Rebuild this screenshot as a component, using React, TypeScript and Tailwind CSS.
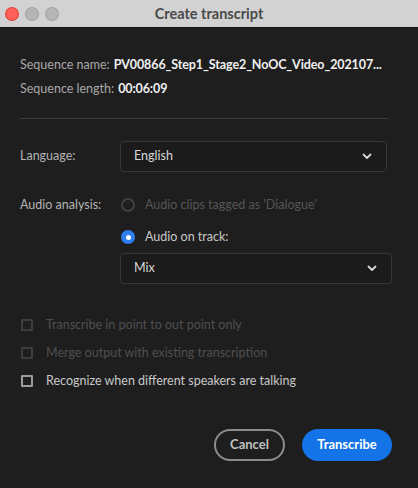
import React from "react";

function Chevron() {
  return (
    <svg width="10" height="7" viewBox="0 0 10 7" fill="none">
      <path d="M1.5 1.5 L5 5 L8.5 1.5" stroke="#d6d6d6" strokeWidth="1.8" strokeLinecap="round" strokeLinejoin="round" />
    </svg>
  );
}

function Select({ value, className }: { value: string; className: string }) {
  return (
    <div
      className={`flex h-[31px] shrink-0 items-center justify-between rounded-[4px] border border-[#383838] bg-[#1b1b1b] pl-[13px] pr-[14px] text-[12.5px] text-[#d8d8d8] ${className}`}
    >
      <span>{value}</span>
      <Chevron />
    </div>
  );
}

function Checkbox({ label, disabled }: { label: string; disabled?: boolean }) {
  return (
    <div className="flex h-5 items-center">
      <div
        className={`ml-[1px] h-[12px] w-[12px] rounded-[1px] border-2 ${disabled ? "border-[#3d3d3d]" : "border-[#9c9c9c]"}`}
      />
      <span className={`ml-[13px] text-[12.5px] ${disabled ? "text-[#4f4f4f]" : "text-[#c9c9c9]"}`}>{label}</span>
    </div>
  );
}

export default function App() {
  return (
    <div
      className="h-[488px] w-[418px] overflow-hidden bg-[#1e1e1e]"
      style={{ fontFamily: 'Lato, "Noto Sans", sans-serif' }}
    >
      <div className="relative flex h-[28px] items-center border-b border-[#111] bg-[#d2d2d2]">
        <div className="ml-[6px] flex gap-[8px]">
          <div className="h-[12px] w-[12px] rounded-full bg-[#fe5f57] ring-1 ring-[#e0443e]" />
          <div className="h-[12px] w-[12px] rounded-full bg-[#b5b5b5] ring-1 ring-[#a2a2a2]" />
          <div className="h-[12px] w-[12px] rounded-full bg-[#b5b5b5] ring-1 ring-[#a2a2a2]" />
        </div>
        <div className="absolute inset-0 flex items-center justify-center text-[14.5px] font-bold text-[#4a4a4a]">
          Create transcript
        </div>
      </div>

      <div className="pl-[20px] pr-[30px] pt-[25px]">
        <div className="flex h-6 items-center whitespace-nowrap">
          <span className="text-[12.5px] text-[#a8a8a8]">Sequence name:</span>
          <span className="ml-[4px] text-[12.5px] font-bold tracking-[-0.1px] text-[#f0f0f0]">PV00866_Step1_Stage2_NoOC_Video_202107...</span>
        </div>
        <div className="flex h-6 items-center whitespace-nowrap">
          <span className="text-[12.5px] text-[#a8a8a8]">Sequence length:</span>
          <span className="ml-[4px] text-[12.5px] font-bold tracking-[-0.1px] text-[#f0f0f0]">00:06:09</span>
        </div>

        <div className="mt-[17px] h-px bg-[#3a3a3a]" />

        <div className="mt-[22px] flex items-center">
          <span className="w-[100px] shrink-0 text-[12.5px] text-[#b4b4b4]">Language:</span>
          <Select value="English" className="w-[267px]" />
        </div>

        <div className="mt-[23px] flex">
          <span className="flex h-5 w-[100px] shrink-0 items-center text-[12.5px] text-[#b4b4b4]">Audio analysis:</span>
          <div className="flex shrink-0 flex-col">
            <div className="flex h-5 items-center">
              <div className="ml-[1px] h-[14px] w-[14px] rounded-full border-2 border-[#404040]" />
              <span className="ml-[10px] text-[12.5px] text-[#555555]">Audio clips tagged as 'Dialogue'</span>
            </div>
            <div className="mt-[12px] flex h-5 items-center">
              <div className="ml-[1px] flex h-[14px] w-[14px] items-center justify-center rounded-full bg-[#2d7ff0]">
                <div className="h-[5px] w-[5px] rounded-full bg-white" />
              </div>
              <span className="ml-[10px] text-[12.5px] text-[#c9c9c9]">Audio on track:</span>
            </div>
            <Select value="Mix" className="mt-[6px] w-[272px]" />
          </div>
        </div>

        <div className="mt-[31px] flex flex-col gap-[8px]">
          <Checkbox label="Transcribe in point to out point only" disabled />
          <Checkbox label="Merge output with existing transcription" disabled />
          <Checkbox label="Recognize when different speakers are talking" />
        </div>

        <div className="mt-[38px] flex justify-end gap-[17px]">
          <button className="h-[32px] w-[71px] rounded-full border-2 border-[#8c8c8c] text-[13px] font-bold text-[#c2c2c2]">
            Cancel
          </button>
          <button className="mr-[-4px] h-[32px] w-[90px] rounded-full bg-[#1473e6] text-[13px] font-bold text-white">
            Transcribe
          </button>
        </div>
      </div>
    </div>
  );
}
